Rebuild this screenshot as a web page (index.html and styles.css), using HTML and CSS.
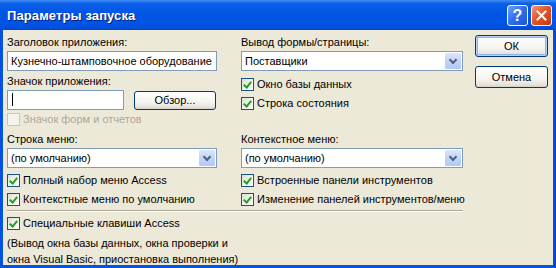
FILE: index.html
```html
<!DOCTYPE html>
<html>
<head>
  <meta charset="utf-8">
  <link rel="stylesheet" href="styles.css">
</head>
<body>
  <div class="dialog">
    <div class="titlebar">
      <span class="title">Параметры запуска</span>
      <div class="title-buttons">
        <span class="tb-btn tb-help">?</span>
        <span class="tb-btn tb-close">
          <svg width="13" height="13" viewBox="0 0 13 13"><path d="M2.5 2.5 L10.5 10.5 M10.5 2.5 L2.5 10.5" stroke="#fff" stroke-width="2" stroke-linecap="square"/></svg>
        </span>
      </div>
    </div>

    <div class="client">
      <div class="main">
        <div class="grid">
          <!-- top left -->
          <div class="cell">
            <div class="label">Заголовок приложения:</div>
            <div class="textbox">Кузнечно-штамповочное оборудование</div>
            <div class="label gap-top">Значок приложения:</div>
            <div class="icon-row">
              <div class="textbox short"><span class="caret"></span></div>
              <button class="btn browse">Обзор...</button>
            </div>
            <div class="check disabled"><span class="box"></span>Значок форм и отчетов</div>
          </div>

          <!-- top right -->
          <div class="cell">
            <div class="label">Вывод формы/страницы:</div>
            <div class="combo">Поставщики<span class="arrow"></span></div>
            <div class="check checked first"><span class="box"></span>Окно базы данных</div>
            <div class="check checked"><span class="box"></span>Строка состояния</div>
          </div>

          <!-- bottom left -->
          <div class="cell">
            <div class="label">Строка меню:</div>
            <div class="combo">(по умолчанию)<span class="arrow"></span></div>
            <div class="check checked"><span class="box"></span>Полный набор меню Access</div>
            <div class="check checked"><span class="box"></span>Контекстные меню по умолчанию</div>
          </div>

          <!-- bottom right -->
          <div class="cell">
            <div class="label">Контекстное меню:</div>
            <div class="combo">(по умолчанию)<span class="arrow"></span></div>
            <div class="check checked"><span class="box"></span>Встроенные панели инструментов</div>
            <div class="check checked"><span class="box"></span>Изменение панелей инструментов/меню</div>
          </div>
        </div>

        <div class="separator"></div>

        <div class="check checked"><span class="box"></span>Специальные клавиши Access</div>
        <p class="note">(Вывод окна базы данных, окна проверки и<br>окна Visual Basic, приостановка выполнения)</p>
      </div>

      <div class="buttons">
        <button class="btn default">ОК</button>
        <button class="btn">Отмена</button>
      </div>
    </div>
  </div>
</body>
</html>
```

FILE: styles.css
```css
html, body {
  margin: 0;
  padding: 0;
}

body {
  width: 556px;
  height: 268px;
  overflow: hidden;
  font-family: "Liberation Sans", Arial, sans-serif;
  font-size: 11px;
  color: #000;
}

.dialog {
  width: 556px;
  height: 268px;
  box-sizing: border-box;
  background: linear-gradient(to right, #0a4fd8 0, #0055e5 3px, #0055e5 553px, #003fc0 556px);
  padding: 0 3px 3px 3px;
  display: flex;
  flex-direction: column;
}

.titlebar {
  flex: none;
  height: 30px;
  margin: 0 -3px;
  padding: 0 4px 0 7px;
  display: flex;
  align-items: center;
  justify-content: space-between;
  background: linear-gradient(to bottom, #3f8cf3 0%, #0a5fe9 12%, #0055e5 45%, #0054e3 85%, #0048d0 100%);
}

.title {
  color: #fff;
  font-weight: bold;
  font-size: 13px;
  text-shadow: 1px 1px 0 #0a1e80;
  letter-spacing: 0.1px;
}

.title-buttons {
  display: flex;
  gap: 3px;
  margin-top: 1px;
}

.tb-btn {
  width: 19px;
  height: 19px;
  border: 1px solid #fff;
  border-radius: 3px;
  display: flex;
  align-items: center;
  justify-content: center;
  color: #fff;
  font-weight: bold;
  font-size: 16px;
}

.tb-help {
  background: linear-gradient(135deg, #6fa0f7 0%, #2e6df0 50%, #1b54d8 100%);
}

.tb-close {
  background: linear-gradient(135deg, #f2997c 0%, #e2552c 45%, #c6380f 100%);
}

.client {
  flex: 1;
  min-height: 0;
  overflow: hidden;
  background: #ece9d8;
  display: flex;
  padding: 5px 0 0 4px;
}

.main {
  width: 456px;
  display: flex;
  flex-direction: column;
}

.grid {
  display: grid;
  grid-template-columns: 210px 222px;
  column-gap: 24px;
  row-gap: 6px;
  align-items: start;
}

.cell {
  display: flex;
  flex-direction: column;
}

.label {
  height: 13px;
  line-height: 13px;
  margin-top: 1px;
  white-space: nowrap;
}

.label.gap-top {
  margin-top: 4px;
}

.textbox, .combo {
  box-sizing: border-box;
  height: 20px;
  margin-top: 2px;
  background: #fff;
  border: 1px solid #7f9db9;
  padding: 0 3px;
  line-height: 18px;
  white-space: nowrap;
  overflow: hidden;
}

.textbox.short {
  width: 117px;
  margin-top: 0;
}

.caret {
  display: inline-block;
  width: 1px;
  height: 13px;
  background: #000;
  vertical-align: -2px;
  margin-left: 1px;
}

.icon-row {
  display: flex;
  align-items: center;
  gap: 10px;
  margin-top: 2px;
}

.combo {
  position: relative;
}

.combo .arrow {
  position: absolute;
  right: 1px;
  top: 1px;
  width: 16px;
  height: 16px;
  border-radius: 1px;
  background: linear-gradient(to bottom, #dde6fb 0%, #c4d4f7 50%, #b4c8f5 100%);
}

.combo .arrow::after {
  content: "";
  position: absolute;
  left: 5px;
  top: 4px;
  width: 4px;
  height: 4px;
  border-right: 2px solid #4d6185;
  border-bottom: 2px solid #4d6185;
  transform: rotate(45deg);
}

.check {
  display: flex;
  align-items: center;
  height: 13px;
  line-height: 13px;
  margin-top: 6px;
  white-space: nowrap;
}

.check.first {
  margin-top: 7px;
}

.check .box {
  box-sizing: border-box;
  width: 13px;
  height: 13px;
  border: 1px solid #1c5180;
  background: linear-gradient(135deg, #dcdcd7 0%, #f5f5f2 60%, #fff 100%);
  margin-right: 3px;
  position: relative;
  flex: none;
}

.check.checked .box::after {
  content: "";
  position: absolute;
  left: 3px;
  top: 1px;
  width: 3px;
  height: 6px;
  border-right: 2px solid #21a121;
  border-bottom: 2px solid #21a121;
  transform: rotate(40deg);
}

.check.disabled {
  color: #aca899;
  margin-top: 3px;
}

.check.disabled .box {
  border-color: #cac8bb;
  background: #f4f3ee;
}

.separator {
  height: 0;
  border-top: 1px solid #aca899;
  border-bottom: 1px solid #fff;
  margin-top: 4px;
}

.main > .check {
  margin-top: 5px;
}

.note {
  margin: 5px 0 0 0;
  line-height: 16px;
}

.buttons {
  display: flex;
  flex-direction: column;
  gap: 9px;
  margin-left: 12px;
}

.btn {
  box-sizing: border-box;
  width: 73px;
  height: 22px;
  padding: 0;
  font-family: inherit;
  font-size: 11px;
  color: #000;
  border: 1px solid #003c74;
  border-radius: 3px;
  background: linear-gradient(to bottom, #fff 0%, #f5f4ef 60%, #e3e2da 90%, #d6d0c5 100%);
}

.btn.default {
  box-shadow: inset 0 0 0 1px #b9d1fa, inset 0 0 0 2px #8fb2f0;
}

.btn.browse {
  width: 82px;
  height: 19px;
}
```
